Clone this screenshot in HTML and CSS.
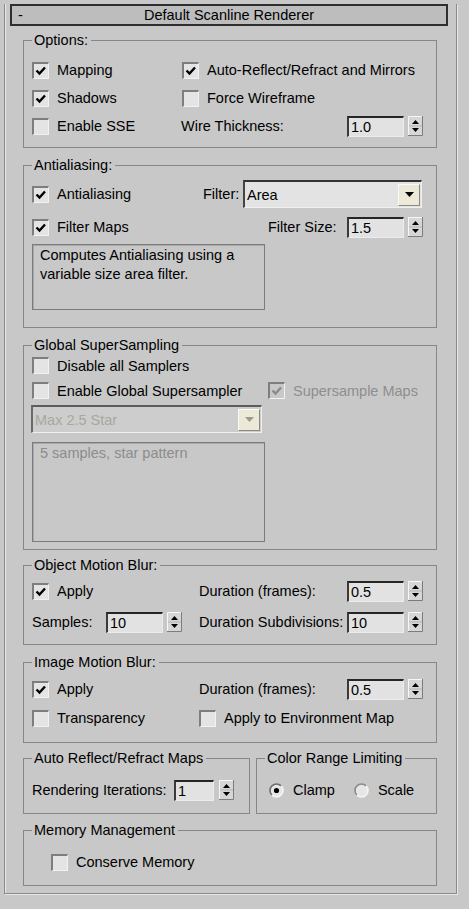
FILE: index.html
```html
<!DOCTYPE html>
<html>
<head>
<meta charset="utf-8">
<link rel="stylesheet" href="styles.css">
</head>
<body>
<div class="rollout">
  <div class="rollout-header"><span class="minus">-</span><span class="title">Default Scanline Renderer</span></div>

  <fieldset class="grp g-opt">
    <legend>Options:</legend>
    <div class="row">
      <label class="check w150"><span class="box"><svg viewBox="0 0 14 14"><path d="M2.5 6.5L5.5 9.5L11 3.5"/></svg></span>Mapping</label>
      <label class="check"><span class="box"><svg viewBox="0 0 14 14"><path d="M2.5 6.5L5.5 9.5L11 3.5"/></svg></span>Auto-Reflect/Refract and Mirrors</label>
    </div>
    <div class="row">
      <label class="check w150"><span class="box"><svg viewBox="0 0 14 14"><path d="M2.5 6.5L5.5 9.5L11 3.5"/></svg></span>Shadows</label>
      <label class="check"><span class="box"></span>Force Wireframe</label>
    </div>
    <div class="row">
      <label class="check w149"><span class="box"></span>Enable SSE</label>
      <span class="lbl w166">Wire Thickness:</span>
      <span class="spinner"><span class="field">1.0</span><svg class="arrows" viewBox="0 0 15 20"><rect width="15" height="20" fill="#d6d6d6"/><path d="M0 19.5H14.5V0" stroke="#7c7c7c" fill="none"/><path d="M0.5 19V0.5H14" stroke="#f6f6f6" fill="none"/><path d="M1 10H14" stroke="#b4b4b4"/><path d="M4 8h7l-3.5-4z"/><path d="M4 12h7l-3.5 4z"/></svg></span>
    </div>
  </fieldset>

  <fieldset class="grp g-aa">
    <legend>Antialiasing:</legend>
    <div class="row">
      <label class="check w171"><span class="box"><svg viewBox="0 0 14 14"><path d="M2.5 6.5L5.5 9.5L11 3.5"/></svg></span>Antialiasing</label>
      <span class="lbl w40">Filter:</span>
      <span class="dropdown w179"><span class="dd-text">Area</span><span class="dd-btn"><svg viewBox="0 0 9 5" width="9" height="5"><path d="M0 0h9l-4.5 5z"/></svg></span></span>
    </div>
    <div class="row r2">
      <label class="check w236"><span class="box"><svg viewBox="0 0 14 14"><path d="M2.5 6.5L5.5 9.5L11 3.5"/></svg></span>Filter Maps</label>
      <span class="lbl w79">Filter Size:</span>
      <span class="spinner"><span class="field">1.5</span><svg class="arrows" viewBox="0 0 15 20"><rect width="15" height="20" fill="#d6d6d6"/><path d="M0 19.5H14.5V0" stroke="#7c7c7c" fill="none"/><path d="M0.5 19V0.5H14" stroke="#f6f6f6" fill="none"/><path d="M1 10H14" stroke="#b4b4b4"/><path d="M4 8h7l-3.5-4z"/><path d="M4 12h7l-3.5 4z"/></svg></span>
    </div>
    <div class="desc d-aa">Computes Antialiasing using a<br>variable size area filter.</div>
  </fieldset>

  <fieldset class="grp g-ss">
    <legend>Global SuperSampling</legend>
    <div class="row short">
      <label class="check"><span class="box"></span>Disable all Samplers</label>
    </div>
    <div class="row short">
      <label class="check w236"><span class="box"></span>Enable Global Supersampler</label>
      <label class="check disabled"><span class="box"><svg viewBox="0 0 14 14"><path d="M2.5 6.5L5.5 9.5L11 3.5"/></svg></span>Supersample Maps</label>
    </div>
    <span class="dropdown w231 dd-disabled"><span class="dd-text">Max 2.5 Star</span><span class="dd-btn"><svg viewBox="0 0 9 5" width="9" height="5"><path d="M0 0h9l-4.5 5z"/></svg></span></span>
    <div class="desc d-ss disabled-text">5 samples, star pattern</div>
  </fieldset>

  <fieldset class="grp g-omb">
    <legend>Object Motion Blur:</legend>
    <div class="row">
      <label class="check w167"><span class="box"><svg viewBox="0 0 14 14"><path d="M2.5 6.5L5.5 9.5L11 3.5"/></svg></span>Apply</label>
      <span class="lbl w148">Duration (frames):</span>
      <span class="spinner"><span class="field">0.5</span><svg class="arrows" viewBox="0 0 15 20"><rect width="15" height="20" fill="#d6d6d6"/><path d="M0 19.5H14.5V0" stroke="#7c7c7c" fill="none"/><path d="M0.5 19V0.5H14" stroke="#f6f6f6" fill="none"/><path d="M1 10H14" stroke="#b4b4b4"/><path d="M4 8h7l-3.5-4z"/><path d="M4 12h7l-3.5 4z"/></svg></span>
    </div>
    <div class="row r2b">
      <span class="lbl w74">Samples:</span>
      <span class="spinner"><span class="field">10</span><svg class="arrows" viewBox="0 0 15 20"><rect width="15" height="20" fill="#d6d6d6"/><path d="M0 19.5H14.5V0" stroke="#7c7c7c" fill="none"/><path d="M0.5 19V0.5H14" stroke="#f6f6f6" fill="none"/><path d="M1 10H14" stroke="#b4b4b4"/><path d="M4 8h7l-3.5-4z"/><path d="M4 12h7l-3.5 4z"/></svg></span>
      <span class="lbl w148 ml17">Duration Subdivisions:</span>
      <span class="spinner"><span class="field">10</span><svg class="arrows" viewBox="0 0 15 20"><rect width="15" height="20" fill="#d6d6d6"/><path d="M0 19.5H14.5V0" stroke="#7c7c7c" fill="none"/><path d="M0.5 19V0.5H14" stroke="#f6f6f6" fill="none"/><path d="M1 10H14" stroke="#b4b4b4"/><path d="M4 8h7l-3.5-4z"/><path d="M4 12h7l-3.5 4z"/></svg></span>
    </div>
  </fieldset>

  <fieldset class="grp g-imb">
    <legend>Image Motion Blur:</legend>
    <div class="row">
      <label class="check w167"><span class="box"><svg viewBox="0 0 14 14"><path d="M2.5 6.5L5.5 9.5L11 3.5"/></svg></span>Apply</label>
      <span class="lbl w148">Duration (frames):</span>
      <span class="spinner"><span class="field">0.5</span><svg class="arrows" viewBox="0 0 15 20"><rect width="15" height="20" fill="#d6d6d6"/><path d="M0 19.5H14.5V0" stroke="#7c7c7c" fill="none"/><path d="M0.5 19V0.5H14" stroke="#f6f6f6" fill="none"/><path d="M1 10H14" stroke="#b4b4b4"/><path d="M4 8h7l-3.5-4z"/><path d="M4 12h7l-3.5 4z"/></svg></span>
    </div>
    <div class="row r2c">
      <label class="check w167"><span class="box"></span>Transparency</label>
      <label class="check"><span class="box"></span>Apply to Environment Map</label>
    </div>
  </fieldset>

  <div class="pair">
    <fieldset class="grp g-arm">
      <legend>Auto Reflect/Refract Maps</legend>
      <div class="row">
        <span class="lbl w142">Rendering Iterations:</span>
        <span class="spinner gap5"><span class="field narrow">1</span><svg class="arrows" viewBox="0 0 15 20"><rect width="15" height="20" fill="#d6d6d6"/><path d="M0 19.5H14.5V0" stroke="#7c7c7c" fill="none"/><path d="M0.5 19V0.5H14" stroke="#f6f6f6" fill="none"/><path d="M1 10H14" stroke="#b4b4b4"/><path d="M4 8h7l-3.5-4z"/><path d="M4 12h7l-3.5 4z"/></svg></span>
      </div>
    </fieldset>
    <fieldset class="grp g-crl">
      <legend>Color Range Limiting</legend>
      <div class="row">
        <label class="radio-item"><svg class="radio" viewBox="0 0 15 15"><circle cx="7.5" cy="7.5" r="6.5" fill="#e6e6e6"/><path d="M12.1 2.9A6.5 6.5 0 0 0 2.9 12.1" stroke="#6e6e6e" stroke-width="1.6" fill="none"/><path d="M2.9 12.1A6.5 6.5 0 0 0 12.1 2.9" stroke="#f4f4f4" stroke-width="1.6" fill="none"/><circle cx="7.5" cy="7.5" r="2.6" fill="#000"/></svg>Clamp</label>
        <label class="radio-item"><svg class="radio" viewBox="0 0 15 15"><circle cx="7.5" cy="7.5" r="6.5" fill="#e6e6e6"/><path d="M12.1 2.9A6.5 6.5 0 0 0 2.9 12.1" stroke="#8c8c8c" stroke-width="1.6" fill="none"/><path d="M2.9 12.1A6.5 6.5 0 0 0 12.1 2.9" stroke="#f4f4f4" stroke-width="1.6" fill="none"/></svg>Scale</label>
      </div>
    </fieldset>
  </div>

  <fieldset class="grp g-mem">
    <legend>Memory Management</legend>
    <div class="row">
      <label class="check ml19"><span class="box"></span>Conserve Memory</label>
    </div>
  </fieldset>
</div>
</body>
</html>
```
FILE: styles.css
```css
* { box-sizing: border-box; }

body {
  margin: 0;
  width: 469px;
  height: 909px;
  overflow: hidden;
  background: #c8c8c8;
  font-family: "Liberation Sans", Arial, sans-serif;
  font-size: 14.5px;
  color: #000;
}

.rollout {
  margin: 15px 0 0 4px;
  width: 453px;
  border: 1px solid #8a8a8a;
  border-top: 0;
  padding: 0 0 7px 0;
  box-shadow: 1px 1px 0 #e8e8e8, inset 1px 0 0 #e8e8e8;
}

.rollout-header {
  margin: -11px 0 0 5px;
  width: 438px;
  height: 22px;
  border: 2px solid #2e2e2e;
  background: #bdbdbd;
  display: flex;
  align-items: center;
  line-height: 16px;
}
.minus { width: 30px; padding-left: 6px; }
.title { flex: 1; text-align: center; margin-right: 30px; }

.grp {
  margin: 0 0 0 18px;
  width: 414px;
  min-width: 0;
  border: 1px solid #878787;
  padding: 0 8px;
}
.grp legend {
  padding: 0 3px 0 2px;
  line-height: 16px;
}

.g-opt { margin-top: 6px; padding-top: 8px; padding-bottom: 7px; }
.g-aa  { margin-top: 9px; padding-top: 7px; padding-bottom: 17px; }
.g-ss  { margin-top: 9px; padding-top: 0; padding-bottom: 7px; }
.g-omb { margin-top: 7px; padding-top: 4px; padding-bottom: 8px; }
.g-imb { margin-top: 9px; padding-top: 5px; padding-bottom: 10px; }
.g-mem { margin-top: 8px; padding-top: 10px; padding-bottom: 9px; }

.pair {
  display: flex;
  gap: 6px;
  margin: 7px 0 0 18px;
  width: 414px;
}
.pair .grp { margin: 0; padding-top: 10px; padding-bottom: 9px; }
.g-arm { width: 227px; }
.g-crl { width: 181px; }

.row {
  display: flex;
  align-items: center;
  height: 28px;
  white-space: nowrap;
}
.row.short { height: 25px; }
.r2 { margin-top: 5px; }
.r2b { margin-top: 3px; }
.r2c { margin-top: 1px; }

.w40 { width: 40px; flex: none; }
.w74 { width: 74px; flex: none; }
.w79 { width: 79px; flex: none; }
.w142 { width: 142px; flex: none; }
.w148 { width: 148px; flex: none; }
.w149 { width: 149px; flex: none; }
.w150 { width: 150px; flex: none; }
.w166 { width: 166px; flex: none; }
.w167 { width: 167px; flex: none; }
.w171 { width: 171px; flex: none; }
.w179 { width: 179px; flex: none; }
.w231 { width: 231px; flex: none; }
.w236 { width: 236px; flex: none; }
.ml17 { margin-left: 17px; }
.ml19 { margin-left: 19px; }

.check {
  display: flex;
  align-items: center;
}
.box {
  flex: none;
  width: 17px;
  height: 17px;
  margin-right: 8px;
  background: #e4e4e4;
  border-top: 2px solid #7e7e7e;
  border-left: 2px solid #7e7e7e;
  border-right: 1px solid #f2f2f2;
  border-bottom: 1px solid #f2f2f2;
  display: flex;
}
.box svg {
  width: 14px;
  height: 14px;
}
.box svg path {
  fill: none;
  stroke: #000;
  stroke-width: 2.4;
}
.check.disabled { color: #8e8e8e; }
.check.disabled .box { background: #c8c8c8; }
.check.disabled .box svg path { stroke: #8a8a8a; }

.spinner {
  display: flex;
  align-items: center;
  flex: none;
}
.field {
  width: 57px;
  height: 21px;
  background: #e2e2e2;
  border-top: 2px solid #262626;
  border-left: 2px solid #3a3a3a;
  border-right: 1px solid #ececec;
  border-bottom: 1px solid #ececec;
  padding-left: 2px;
  line-height: 18px;
}
.field.narrow { width: 40px; }
.arrows {
  width: 15px;
  height: 20px;
  margin-left: 4px;
}
.gap5 .arrows { margin-left: 5px; }

.dropdown {
  display: flex;
  align-items: center;
  height: 28px;
  background: #e3e3e3;
  border-top: 2px solid #333;
  border-left: 2px solid #444;
  border-right: 1px solid #efefef;
  border-bottom: 1px solid #efefef;
  padding-left: 2px;
}
.dd-text { flex: 1; }
.dd-btn {
  width: 22px;
  height: 22px;
  margin-right: 1px;
  background: #ece9d8;
  border: 1px solid;
  border-color: #fbfbf6 #8c8a80 #8c8a80 #fbfbf6;
  display: flex;
  align-items: center;
  justify-content: center;
}
.dd-btn path { fill: #000; }
.dd-disabled {
  margin-top: 2px;
  margin-left: -1px;
  background: #cdcdcd;
  border-top-color: #5c5c5c;
  border-left-color: #6a6a6a;
  color: #a9a89c;
}
.dd-disabled .dd-btn path { fill: #9a9a94; }

.desc {
  width: 233px;
  border: 1px solid #7c7c7c;
  box-shadow: inset 1px 1px 0 #a8a8a8;
  padding: 1px 7px;
  line-height: 19px;
}
.d-aa { margin-top: 3px; height: 66px; }
.d-ss { margin-top: 9px; height: 100px; }
.disabled-text { color: #8c8c8c; }

.radio-item {
  display: flex;
  align-items: center;
}
.radio {
  width: 15px;
  height: 15px;
  margin: 0 9px 0 4px;
}
.radio-item + .radio-item { margin-left: 15px; }
```
